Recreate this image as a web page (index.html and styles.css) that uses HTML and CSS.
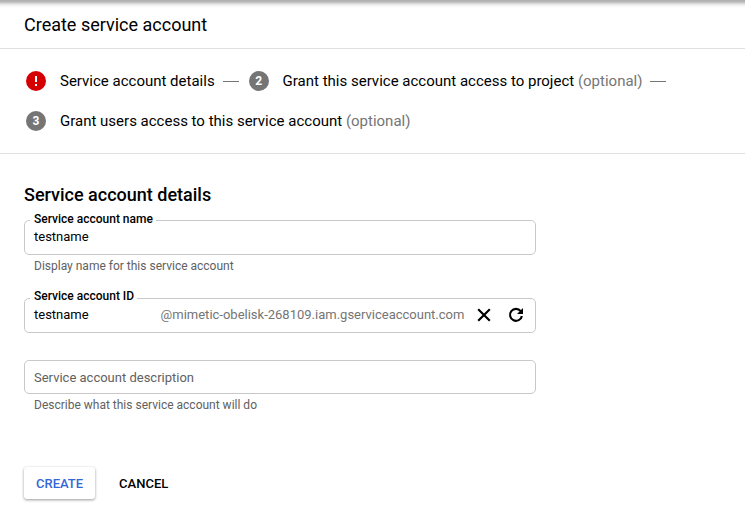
FILE: index.html
```html
<!DOCTYPE html>
<html lang="en">
<head>
<meta charset="utf-8">
<title>Create service account</title>
<link rel="stylesheet" href="styles.css">
</head>
<body>
<header class="header"><h1 class="title">Create service account</h1></header>
<nav class="stepper">
  <div class="row">
    <span class="badge error"><svg width="20" height="20" viewBox="0 0 20 20"><path d="M9 5h2v6H9zM9 13h2v2H9z" fill="#fff"/></svg></span>
    <span class="step first">Service account details</span>
    <span class="line"></span>
    <span class="badge">2</span>
    <span class="step second">Grant this service account access to project <span class="optional">(optional)</span></span>
    <span class="line"></span>
  </div>
  <div class="row">
    <span class="badge">3</span>
    <span class="step">Grant users access to this service account <span class="optional">(optional)</span></span>
  </div>
</nav>
<main class="form">
  <h2 class="heading">Service account details</h2>
  <div class="field name">
    <label class="label">Service account name</label>
    <span class="value">testname</span>
  </div>
  <p class="hint">Display name for this service account</p>
  <div class="field id">
    <label class="label">Service account ID</label>
    <span class="value">testname</span>
    <span class="suffix">@mimetic-obelisk-268109.iam.gserviceaccount.com</span>
    <svg class="icon clear" viewBox="0 0 20 20"><path d="m4.2 4.2 11.6 11.6M15.8 4.2 4.2 15.8" fill="none" stroke="#000" stroke-width="2.2"/></svg>
    <svg class="icon" viewBox="0 0 20 20"><path d="M14.7 6.1A6 6 0 1 0 15.9 11" fill="none" stroke="#000" stroke-width="2.1"/><path d="M17 3v6h-6z"/></svg>
  </div>
  <div class="field description"><span class="placeholder">Service account description</span></div>
  <p class="hint">Describe what this service account will do</p>
  <div class="actions">
    <button class="button create">CREATE</button>
    <button class="button cancel">CANCEL</button>
  </div>
</main>
</body>
</html>
```
FILE: styles.css
```css
* { box-sizing: border-box; }
body { margin: 0; height: 515px; overflow: hidden; background: #fff; color: #000; font-family: Roboto, sans-serif; }
.header { height: 49px; padding: 13px 24px 0; border-bottom: 1px solid #e0e0e0; background: linear-gradient(#b0b0b0 1px, #bcbcbc 2px, #e2e2e2 4px, #f8f8f8 6px, #fff 8px); }
.title { margin: 0; font-size: 18px; line-height: 24px; font-weight: 400; }
.stepper { height: 105px; padding: 12px 26px; border-bottom: 1px solid #e0e0e0; }
.row { display: flex; align-items: center; height: 40px; white-space: nowrap; }
.badge { display: flex; align-items: center; justify-content: center; flex: none; width: 20px; height: 20px; margin-right: 14px; border-radius: 50%; background: #757575; color: #fff; font-size: 12px; font-weight: 700; }
.error { background: #d50000; }
.step { font-size: 15px; line-height: 20px; }
.first { width: 154.6px; }
.second { width: 359.4px; }
.optional { color: #757575; }
.line { flex: none; width: 16px; height: 1px; margin: 0 10px 0 8px; background: #757575; }
.form { padding: 29px 24px 0; }
.heading { margin: 0; font-size: 18px; line-height: 24px; font-weight: 500; }
.field { position: relative; display: flex; align-items: center; width: 512px; height: 35px; padding: 0 9px; border: 1px solid #c8c8c8; border-radius: 5px; font-size: 13px; }
.name { margin-top: 13px; padding-bottom: 2px; }
.id { margin-top: 25px; padding-bottom: 2px; }
.description { height: 34px; margin-top: 27px; }
.label { position: absolute; top: -9px; left: 5px; padding: 0 3px 0 4px; background: #fff; font-size: 12px; line-height: 14px; font-weight: 500; }
.id .label { top: -10px; }
.value { flex: 1; }
.suffix { color: #757575; margin-right: 9.6px; }
.icon { width: 20px; height: 20px; }
.clear { margin-right: 12px; }
.placeholder { color: #616161; }
.hint { margin: 4px 0 0 10px; font-size: 12px; line-height: 14px; color: #616161; }
.actions { display: flex; gap: 12px; margin-top: 55px; }
.button { height: 32px; padding: 0 12px; border: 0; border-radius: 3px; background: #fff; font: 500 13px Roboto, sans-serif; }
.create { color: #3367d6; box-shadow: 0 1px 3px rgba(0,0,0,.4); }
.cancel { color: #000; }
```
